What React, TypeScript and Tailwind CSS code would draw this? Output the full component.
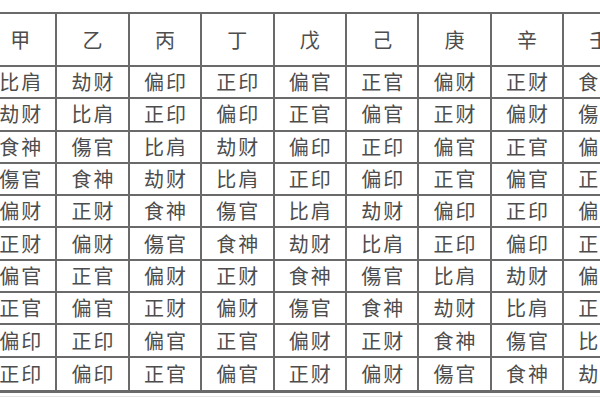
import React from "react";

const stems = ["甲", "乙", "丙", "丁", "戊", "己", "庚", "辛", "壬", "癸"];

const rows: string[][] = [
  ["比肩", "劫财", "偏印", "正印", "偏官", "正官", "偏财", "正财", "食神", "傷官"],
  ["劫财", "比肩", "正印", "偏印", "正官", "偏官", "正财", "偏财", "傷官", "食神"],
  ["食神", "傷官", "比肩", "劫财", "偏印", "正印", "偏官", "正官", "偏财", "正财"],
  ["傷官", "食神", "劫财", "比肩", "正印", "偏印", "正官", "偏官", "正财", "偏财"],
  ["偏财", "正财", "食神", "傷官", "比肩", "劫财", "偏印", "正印", "偏官", "正官"],
  ["正财", "偏财", "傷官", "食神", "劫财", "比肩", "正印", "偏印", "正官", "偏官"],
  ["偏官", "正官", "偏财", "正财", "食神", "傷官", "比肩", "劫财", "偏印", "正印"],
  ["正官", "偏官", "正财", "偏财", "傷官", "食神", "劫财", "比肩", "正印", "偏印"],
  ["偏印", "正印", "偏官", "正官", "偏财", "正财", "食神", "傷官", "比肩", "劫财"],
  ["正印", "偏印", "正官", "偏官", "正财", "偏财", "傷官", "食神", "劫财", "比肩"],
];

export default function App() {
  return (
    <div
      className="w-[600px] h-[400px] overflow-hidden bg-white pt-[12px]"
      style={{ fontFamily: '"Noto Sans CJK SC", "Noto Sans CJK TC", sans-serif' }}
    >
      <div className="ml-[-15px] w-[724px] flex flex-col border-t-2 border-b-[3px] border-[#6a6a6a] text-[#4d4d4d]">
        <div className="flex h-[53px]">
          {stems.map((s) => (
            <div
              key={s}
              className="w-[72.4px] shrink-0 border-r-2 border-b-2 border-[#6a6a6a] flex items-center justify-center text-[20px]"
            >
              {s}
            </div>
          ))}
        </div>
        {rows.map((r, i) => (
          <div key={i} className="flex h-[32.3px]">
            {r.map((g, j) => (
              <div
                key={j}
                className={`w-[72.4px] shrink-0 border-r-2 ${i < 9 ? "border-b-2" : ""} border-[#6a6a6a] flex items-center justify-center text-[20px] tracking-[2px] pl-[2px]`}
              >
                {g}
              </div>
            ))}
          </div>
        ))}
      </div>
      <div className="mt-[3px] h-px w-full bg-[#e4e4e4]" />
    </div>
  );
}
